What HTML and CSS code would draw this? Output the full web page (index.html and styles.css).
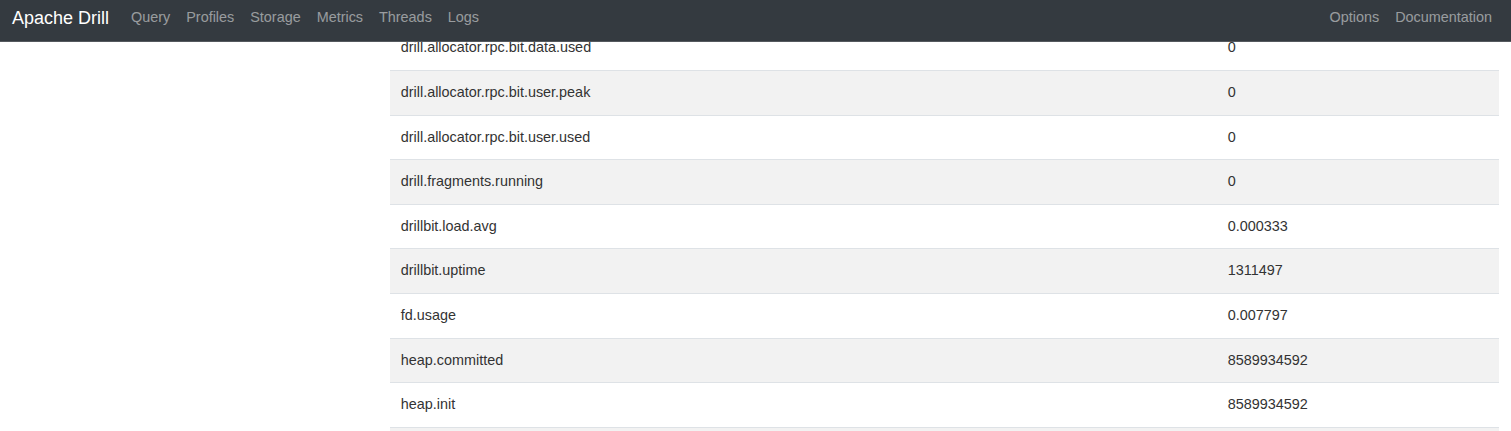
FILE: index.html
```html
<!DOCTYPE html>
<html>
<head>
<meta charset="utf-8">
<title>Apache Drill</title>
<link rel="stylesheet" href="styles.css">
</head>
<body>
<nav class="navbar">
  <div class="nav-left">
    <a class="brand" href="#">Apache Drill</a>
    <a class="nav-link" href="#">Query</a>
    <a class="nav-link" href="#">Profiles</a>
    <a class="nav-link" href="#">Storage</a>
    <a class="nav-link" href="#">Metrics</a>
    <a class="nav-link" href="#">Threads</a>
    <a class="nav-link" href="#">Logs</a>
  </div>
  <div class="nav-right">
    <a class="nav-link" href="#">Options</a>
    <a class="nav-link" href="#">Documentation</a>
  </div>
</nav>
<main class="layout">
  <aside class="sidebar"></aside>
  <section class="content">
    <table class="metrics">
      <colgroup><col class="col-name"><col></colgroup>
      <tbody>
        <tr><td>drill.allocator.rpc.bit.data.used</td><td>0</td></tr>
        <tr><td>drill.allocator.rpc.bit.user.peak</td><td>0</td></tr>
        <tr><td>drill.allocator.rpc.bit.user.used</td><td>0</td></tr>
        <tr><td>drill.fragments.running</td><td>0</td></tr>
        <tr><td>drillbit.load.avg</td><td>0.000333</td></tr>
        <tr><td>drillbit.uptime</td><td>1311497</td></tr>
        <tr><td>fd.usage</td><td>0.007797</td></tr>
        <tr><td>heap.committed</td><td>8589934592</td></tr>
        <tr><td>heap.init</td><td>8589934592</td></tr>
        <tr class="empty-row"><td></td><td></td></tr>
      </tbody>
    </table>
  </section>
</main>
</body>
</html>
```
FILE: styles.css
```css
html, body {
  margin: 0;
  padding: 0;
  background: #fff;
  font-family: "Liberation Sans", Arial, Helvetica, sans-serif;
  font-size: 14.4px;
  color: #333;
  height: 431px;
  overflow: hidden;
}

.navbar {
  position: fixed;
  top: 0;
  left: 0;
  right: 0;
  z-index: 10;
  height: 42px;
  box-sizing: border-box;
  background: #343a40;
  border-bottom: 1px solid #55595e;
  display: flex;
  justify-content: space-between;
  align-items: flex-start;
  padding: 7px 11px 0 12px;
}

.nav-left, .nav-right {
  display: flex;
  align-items: flex-start;
}

.navbar a {
  text-decoration: none;
}

.brand {
  color: #fff;
  font-size: 18px;
  line-height: 22px;
  margin-right: 14px;
}

.nav-link {
  color: rgba(255, 255, 255, 0.5);
  font-size: 14.4px;
  line-height: 20px;
  padding: 0 8px;
}

.layout {
  display: grid;
  grid-template-columns: 389.75px 1fr;
  padding-right: 12px;
  padding-top: 25.4px;
}

.metrics {
  width: 100%;
  border-collapse: collapse;
  table-layout: fixed;
}

.col-name {
  width: 827px;
}

.metrics td {
  border-top: 1px solid #dee2e6;
  padding: 11px;
  line-height: 21.6px;
  vertical-align: top;
  color: #333;
}

.metrics tr:nth-child(even) td {
  background: #f2f2f2;
}

.metrics .empty-row td {
  height: 21.6px;
}
```
